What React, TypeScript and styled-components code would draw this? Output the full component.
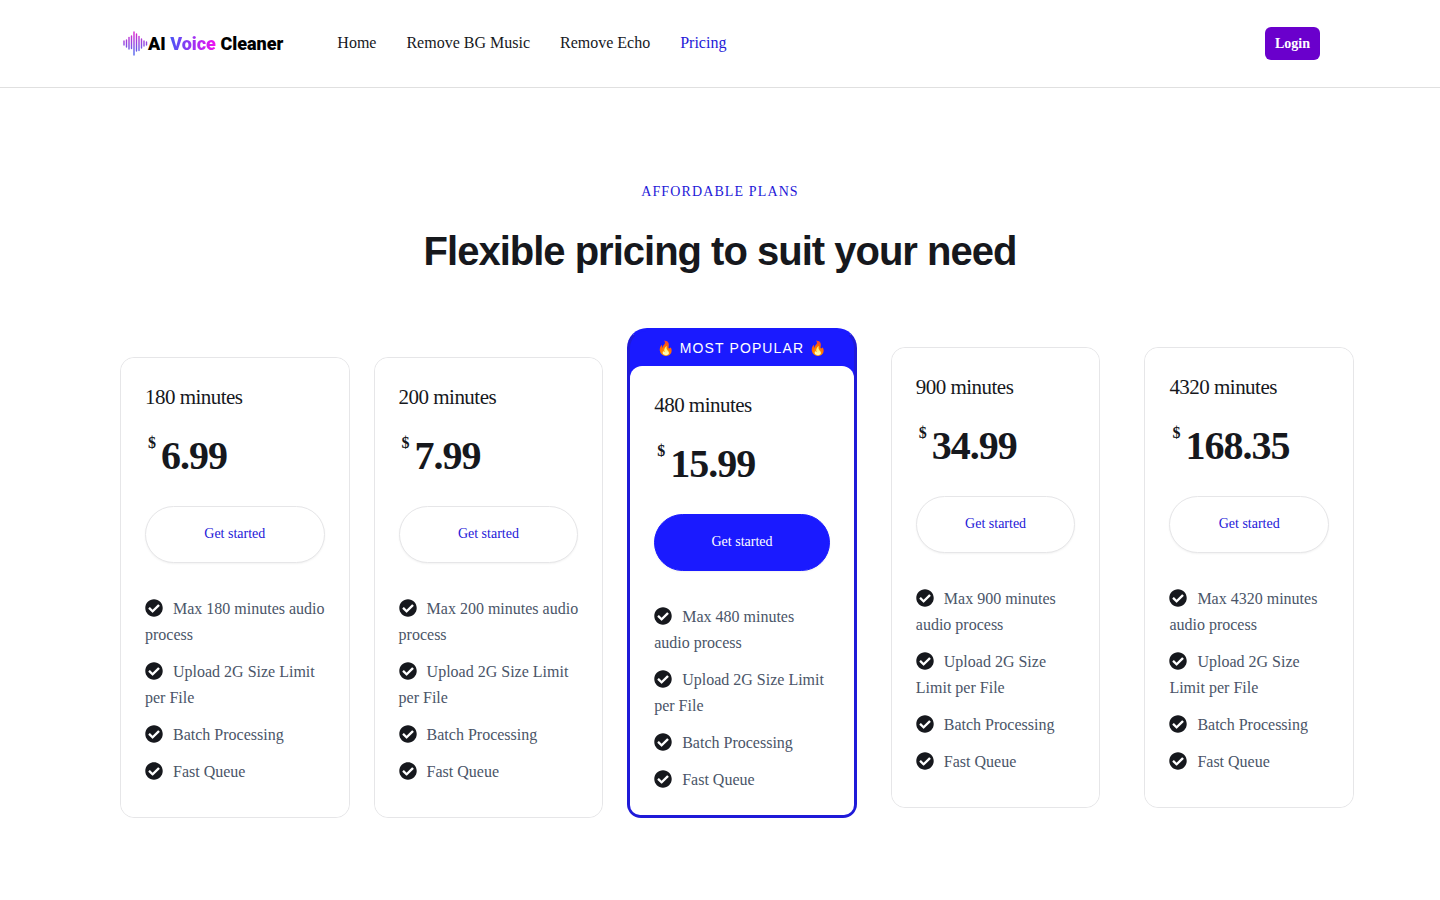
import React from "react";
import styled, { createGlobalStyle, css } from "styled-components";
import { FaCheckCircle } from "react-icons/fa";

const serif = `"Liberation Serif", "Times New Roman", serif`;
const sans = `"Liberation Sans", Arial, sans-serif`;

const GlobalStyle = createGlobalStyle`
  *, *::before, *::after { box-sizing: border-box; }
  body { margin: 0; background: #fff; color: #16181d; font: 16px/26px ${serif}; }
  h1, h2, p, ul { margin: 0; padding: 0; }
  a { color: inherit; text-decoration: none; }
`;

const Header = styled.header`
  border-bottom: 1px solid #e0e0e0;
`;

const Container = styled.div`
  padding: 0 120px;
`;

const Bar = styled(Container)`
  display: flex;
  align-items: center;
  height: 87px;
`;

const Logo = styled.a`
  display: flex;
  align-items: center;
  margin-left: 3px;
  font: 900 18px/26px Roboto, sans-serif;
  color: #000;
  white-space: pre;
`;

const LogoAccent = styled.span`
  background: linear-gradient(90deg, #4a55f5, #f010f0);
  background-clip: text;
  color: transparent;
`;

const Nav = styled.nav`
  display: flex;
  flex: 1;
  gap: 30px;
  margin-left: 54px;
  padding-bottom: 2px;
`;

const NavLink = styled.a<{ $active?: boolean }>`
  color: ${(p) => (p.$active ? "#2418d8" : "#16181d")};
`;

const LoginButton = styled.button`
  height: 33px;
  padding: 0 10px;
  border: 0;
  border-radius: 6px;
  background: #6a00cc;
  color: #fff;
  font: bold 14px/20px ${serif};
`;

const Intro = styled.div`
  padding: 91px 0 51px;
  text-align: center;
`;

const Overline = styled.p`
  color: #2418d8;
  font-size: 14px;
  letter-spacing: 0.08em;
  text-transform: uppercase;
`;

const Title = styled.h1`
  margin-top: 20px;
  font: bold 40px/52px ${sans};
  letter-spacing: -1px;
`;

const Plans = styled.div`
  display: grid;
  grid-template-columns: repeat(5, minmax(0, 1fr));
  gap: 24px;
  align-items: end;
  margin-right: -44px;
  padding-bottom: 82px;
`;

const Card = styled.article<{ $inset?: boolean; $popular?: boolean }>`
  border: 1px solid #e6e6e8;
  border-radius: 14px;
  ${(p) => p.$inset && css`margin: 10px;`}
  ${(p) =>
    p.$popular &&
    css`
      border: 3px solid #1f1ad8;
      border-top-color: #1a1aff;
      border-radius: 20px 20px 14px 14px;
      background: #1a1aff;
    `}
`;

const Ribbon = styled.p`
  height: 35px;
  color: #fff;
  font: 14px/35px ${sans};
  letter-spacing: 0.08em;
  text-align: center;
  text-transform: uppercase;
`;

const CardBody = styled.div<{ $popular?: boolean }>`
  padding: ${(p) => (p.$popular ? "24px 24px 22px" : "24px 24px 32px")};
  border-radius: ${(p) => (p.$popular ? "12px 12px 10px 10px" : "14px")};
  background: #fff;
`;

const PlanName = styled.h2`
  font: 21px/30px ${serif};
  letter-spacing: -0.025em;
`;

const Price = styled.p`
  display: flex;
  align-items: flex-start;
  gap: 5px;
  margin: 19px 0 25px;
  padding-left: 3px;
  font: bold 40px/50px ${serif};
  letter-spacing: -0.025em;
`;

const Currency = styled.span`
  font-size: 16px;
  line-height: 24px;
  letter-spacing: 0;
`;

const StartButton = styled.button<{ $primary?: boolean }>`
  display: block;
  width: 100%;
  height: 57px;
  padding: 0 0 2px;
  border: 1px solid ${(p) => (p.$primary ? "#1a1aff" : "#e6e6e8")};
  border-radius: 29px;
  background: ${(p) => (p.$primary ? "#1a1aff" : "#fff")};
  color: ${(p) => (p.$primary ? "#fff" : "#2418d8")};
  box-shadow: 0 1px 2px rgba(0, 0, 0, 0.05);
  font: 14px/20px ${serif};
`;

const Features = styled.ul`
  display: grid;
  gap: 11px;
  margin-top: 33px;
  color: #4a5568;
  list-style: none;
`;

const Check = styled(FaCheckCircle)`
  width: 18px;
  height: 18px;
  margin-right: 10px;
  color: #16181d;
  vertical-align: -3px;
`;

type Plan = { minutes: number; price: string; popular?: boolean; inset?: boolean };

const plans: Plan[] = [
  { minutes: 180, price: "6.99" },
  { minutes: 200, price: "7.99" },
  { minutes: 480, price: "15.99", popular: true },
  { minutes: 900, price: "34.99", inset: true },
  { minutes: 4320, price: "168.35", inset: true },
];

// Each bar of the logo's sound wave: x, top, bottom.
const bars = [
  [1, 10, 14], [3.5, 9, 16], [6, 6.5, 18], [8.5, 5, 17.5], [11, 1, 24],
  [13.5, 3, 20], [16, 5.5, 19.5], [18.5, 8, 17], [21, 10, 15], [23.5, 11, 14],
];

function Waveform() {
  return (
    <svg width="25" height="25" viewBox="0 0 25 25" fill="none" aria-hidden="true">
      <defs>
        <linearGradient id="wave" x1="0" y1="0" x2="0" y2="25" gradientUnits="userSpaceOnUse">
          <stop offset="0.1" stopColor="#d428cf" />
          <stop offset="0.9" stopColor="#5566ee" />
        </linearGradient>
      </defs>
      {bars.map(([x, top, bottom]) => (
        <path key={x} d={`M${x} ${top}V${bottom}`} stroke="url(#wave)" strokeWidth="1.4" strokeLinecap="round" />
      ))}
    </svg>
  );
}

function PlanCard({ minutes, price, popular, inset }: Plan) {
  const features = [`Max ${minutes} minutes audio process`, "Upload 2G Size Limit per File", "Batch Processing", "Fast Queue"];
  return (
    <Card $popular={popular} $inset={inset}>
      {popular && <Ribbon>🔥 Most popular 🔥</Ribbon>}
      <CardBody $popular={popular}>
        <PlanName>{minutes} minutes</PlanName>
        <Price>
          <Currency>$</Currency>
          {price}
        </Price>
        <StartButton type="button" $primary={popular}>Get started</StartButton>
        <Features>
          {features.map((feature) => (
            <li key={feature}>
              <Check aria-hidden="true" />
              {feature}
            </li>
          ))}
        </Features>
      </CardBody>
    </Card>
  );
}

export default function App() {
  return (
    <>
      <GlobalStyle />
      <Header>
        <Bar>
          <Logo href="#">
            <Waveform />
            AI <LogoAccent>Voice</LogoAccent> Cleaner
          </Logo>
          <Nav>
            <NavLink href="#">Home</NavLink>
            <NavLink href="#">Remove BG Music</NavLink>
            <NavLink href="#">Remove Echo</NavLink>
            <NavLink href="#" $active>Pricing</NavLink>
          </Nav>
          <LoginButton type="button">Login</LoginButton>
        </Bar>
      </Header>
      <Container as="main">
        <Intro>
          <Overline>Affordable plans</Overline>
          <Title>Flexible pricing to suit your need</Title>
        </Intro>
        <Plans>
          {plans.map((plan) => (
            <PlanCard key={plan.minutes} {...plan} />
          ))}
        </Plans>
      </Container>
    </>
  );
}
